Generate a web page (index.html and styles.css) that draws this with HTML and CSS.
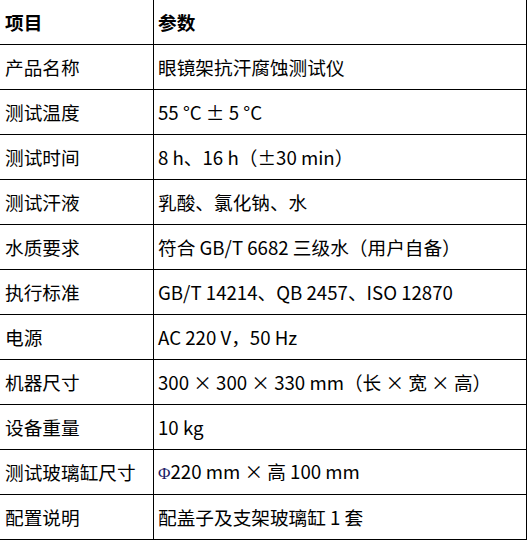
FILE: index.html
```html
<!DOCTYPE html>
<html lang="zh">
<head>
<meta charset="utf-8">
<link rel="stylesheet" href="styles.css">
</head>
<body>
<table class="spec">
<colgroup><col class="c1"><col class="c2"></colgroup>
<tr class="head"><td>项目</td><td>参数</td></tr>
<tr><td>产品名称</td><td>眼镜架抗汗腐蚀测试仪</td></tr>
<tr><td>测试温度</td><td>55 °C ± 5 °C</td></tr>
<tr><td>测试时间</td><td>8 h、16 h（±30 min）</td></tr>
<tr><td>测试汗液</td><td>乳酸、氯化钠、水</td></tr>
<tr><td>水质要求</td><td>符合 GB/T 6682 三级水（用户自备）</td></tr>
<tr><td>执行标准</td><td>GB/T 14214、QB 2457、ISO 12870</td></tr>
<tr><td>电源</td><td>AC 220 V，50 Hz</td></tr>
<tr><td>机器尺寸</td><td>300 × 300 × 330 mm（长 × 宽 × 高）</td></tr>
<tr><td>设备重量</td><td>10 kg</td></tr>
<tr><td>测试玻璃缸尺寸</td><td><span class="phi">Φ</span>220 mm × 高 100 mm</td></tr>
<tr><td>配置说明</td><td>配盖子及支架玻璃缸 1 套</td></tr>
</table>
</body>
</html>
```
FILE: styles.css
```css
html, body {
  margin: 0;
  padding: 0;
  background: #fff;
  overflow: hidden;
}
.spec {
  border-collapse: collapse;
  margin: -1px 0 0 -1px;
  width: 528px;
  table-layout: fixed;
  font-family: "Noto Sans CJK SC", "Noto Sans", sans-serif;
  font-size: 18.67px;
  color: #000;
}
.c1 { width: 154px; }
.spec td {
  border: 1px solid #000;
  height: 44px;
  padding: 0 0 0 5px;
  box-sizing: border-box;
  vertical-align: middle;
  white-space: nowrap;
  line-height: 1;
}
.spec td + td { padding-left: 4px; }
.spec tr { height: 45px; }
.head td { font-weight: bold; }
.phi {
  font-family: "Liberation Serif", serif;
  font-size: 17px;
  color: #1a1a66;
}
```
